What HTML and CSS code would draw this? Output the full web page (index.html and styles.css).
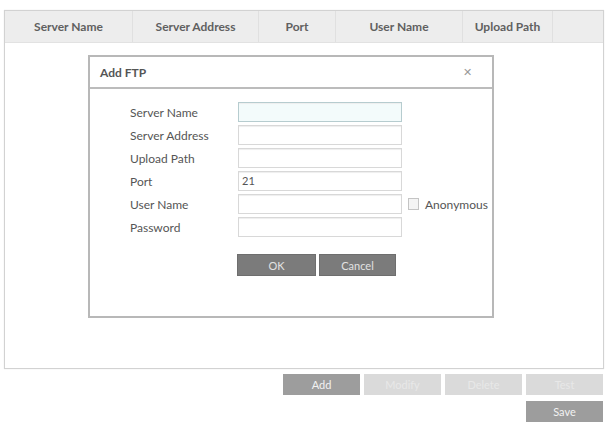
FILE: index.html
```html
<!DOCTYPE html>
<html>
<head>
<meta charset="utf-8">
<link rel="stylesheet" href="styles.css">
</head>
<body>
<div class="page">
  <div class="table-box">
    <div class="thead">
      <div class="th c1">Server Name</div>
      <div class="th c2">Server Address</div>
      <div class="th c3">Port</div>
      <div class="th c4">User Name</div>
      <div class="th c5">Upload Path</div>
      <div class="th c6"></div>
    </div>
    <div class="dialog">
      <div class="dlg-title">
        <span>Add FTP</span>
        <span class="close">&#x2715;</span>
      </div>
      <div class="form">
        <div class="row"><label>Server Name</label><div class="input focus"></div></div>
        <div class="row"><label>Server Address</label><div class="input"></div></div>
        <div class="row"><label>Upload Path</label><div class="input"></div></div>
        <div class="row"><label>Port</label><div class="input">21</div></div>
        <div class="row"><label>User Name</label><div class="input"></div>
          <div class="anon"><span class="chk"></span>Anonymous</div></div>
        <div class="row"><label>Password</label><div class="input"></div></div>
        <div class="dlg-btns">
          <div class="btn dark">OK</div>
          <div class="btn dark">Cancel</div>
        </div>
      </div>
    </div>
  </div>
  <div class="actions">
    <div class="btn mid">Add</div>
    <div class="btn light">Modify</div>
    <div class="btn light">Delete</div>
    <div class="btn light">Test</div>
  </div>
  <div class="actions save-row">
    <div class="btn mid">Save</div>
  </div>
</div>
</body>
</html>
```
FILE: styles.css
```css
html, body {
  margin: 0;
  padding: 0;
  background: #fff;
  font-family: Lato, "Open Sans", sans-serif;
  color: #555;
}
.page {
  padding: 10px 0 0 4px;
  width: 600px;
}
.table-box {
  position: relative;
  width: 598px;
  height: 357px;
  border: 1px solid #d2d2d2;
  box-shadow: 0 0 1px #e0e0e0;
}
.thead {
  display: flex;
  height: 31px;
  background: #ededed;
  border-bottom: 1px solid #e2e2e2;
}
.th {
  display: flex;
  align-items: center;
  justify-content: center;
  font-size: 12px;
  font-weight: bold;
  color: #606060;
  border-right: 1px solid #e0e0e0;
  box-sizing: border-box;
}
.c1 { width: 128px; }
.c2 { width: 126px; }
.c3 { width: 77px; }
.c4 { width: 127px; }
.c5 { width: 90px; }
.c6 { flex: 1; border-right: none; }

.dialog {
  position: absolute;
  left: 83px;
  top: 44px;
  width: 402px;
  height: 259px;
  border: 2px solid #b8b8b8;
  background: #fff;
}
.dlg-title {
  display: flex;
  justify-content: space-between;
  align-items: center;
  height: 30px;
  padding: 0 20px 0 10px;
  border-bottom: 2px solid #bcbcbc;
  font-size: 12px;
  font-weight: bold;
  color: #555;
}
.close {
  font-size: 11px;
  font-weight: normal;
  color: #999;
}
.form {
  padding: 13px 0 0 40px;
  display: flex;
  flex-direction: column;
  gap: 3px;
}
.row {
  display: flex;
  align-items: center;
  height: 20px;
}
.row label {
  width: 108px;
  font-size: 12px;
  color: #555;
}
.input {
  width: 159px;
  height: 18px;
  border: 1px solid #d8d8d8;
  box-shadow: inset 0 1px 1px #eee;
  font-size: 11px;
  line-height: 18px;
  padding-left: 3px;
}
.input.focus {
  background: #f3fbfb;
  border-color: #b6cccf;
}
.anon {
  display: flex;
  align-items: center;
  margin-left: 6px;
  font-size: 12px;
  color: #555;
}
.chk {
  width: 9px;
  height: 10px;
  border: 1px solid #c4c4c4;
  background: #f4f4f4;
  margin-right: 6px;
}
.dlg-btns {
  display: flex;
  gap: 3px;
  margin: 14px 0 0 107px;
}
.btn {
  width: 77px;
  height: 21px;
  display: flex;
  align-items: center;
  justify-content: center;
  font-size: 11px;
}
.dlg-btns .btn:first-child { width: 79px; }
.btn.dark {
  background: #7b7b7b;
  color: #e2e2e2;
  border: 1px solid #6e6e6e;
  box-sizing: border-box;
  height: 22px;
}
.btn.mid {
  background: #9d9d9d;
  color: #f2f2f2;
}
.btn.light {
  background: #dadada;
  color: #e8e8e8;
}
.actions {
  display: flex;
  justify-content: flex-end;
  gap: 4px;
  margin-top: 5px;
  width: 599px;
}
.save-row {
  margin-top: 6px;
}
```
